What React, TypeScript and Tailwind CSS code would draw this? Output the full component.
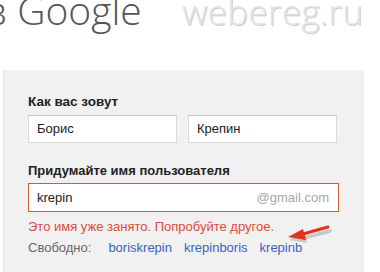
const suggestions = ["boriskrepin", "krepinboris", "krepinb"];

const App = () => {
  return (
    <div className="w-[380px] h-[272px] overflow-hidden bg-white font-['Liberation_Sans',Arial,sans-serif]">
      <div className="h-[70px] overflow-hidden flex items-start">
        <h1 className="-mt-[8px] -ml-[15px] w-[197px] shrink-0 font-['Open_Sans',sans-serif] font-light text-[39px] leading-[36px] text-[#555] whitespace-nowrap">
          в Google
        </h1>
        <span className="-mt-[6px] font-['Open_Sans',sans-serif] font-light text-[35px] leading-[36px] tracking-[0.3px] text-[#e4e4e4] [text-shadow:1px_1px_0_#cdcdcd] whitespace-nowrap">
          webereg.ru
        </span>
      </div>

      <div className="relative ml-[3px] w-[361px] h-[220px] bg-[#f1f1f1] border-l border-[#e4e4e4] pt-[24px] pl-[24px]">
        <div className="text-[13.5px] leading-[16px] font-bold text-[#222]">Как вас зовут</div>
        <div className="mt-[5px] flex gap-[11px]">
          <div className="w-[149px] h-[28px] bg-white border border-[#d9d9d9] border-t-[#c4c4c4] pl-[8px] flex items-center text-[13px] text-[#222]">
            Борис
          </div>
          <div className="w-[149px] h-[28px] bg-white border border-[#d9d9d9] border-t-[#c4c4c4] pl-[8px] flex items-center text-[13px] text-[#222]">
            Крепин
          </div>
        </div>

        <div className="mt-[20px] text-[13px] leading-[16px] font-bold text-[#222]">
          Придумайте имя пользователя
        </div>
        <div className="mt-[4px] w-[311px] h-[29px] bg-white border border-[#cf5d3c] pl-[8px] pr-[9px] flex items-center justify-between text-[13px]">
          <span className="text-[#222]">krepin</span>
          <span className="text-[#a8a8a8]">@gmail.com</span>
        </div>

        <div className="mt-[7px] text-[13px] leading-[16px] text-[#dd4b39]">
          Это имя уже занято. Попробуйте другое.
        </div>
        <div className="mt-[5px] flex text-[13px] leading-[16px]">
          <span className="text-[#666]">Свободно:</span>
          <div className="ml-[17px] flex gap-[12px]">
            {suggestions.map((s) => (
              <span key={s} className="text-[#3f5ec2]">
                {s}
              </span>
            ))}
          </div>
        </div>

        <svg
          className="absolute left-[277px] top-[150px]"
          width="56"
          height="28"
          viewBox="0 0 56 28"
        >
          <path d="M48 9 L22 16" stroke="#7a7a7a" strokeOpacity="0.35" strokeWidth="3.5" strokeLinecap="round" transform="translate(1 2)" />
          <path d="M7 18 L23 10 L25 21 Z" fill="#7a7a7a" fillOpacity="0.35" transform="translate(1 2)" />
          <path d="M47 7 L22 14" stroke="#e2321c" strokeWidth="3" strokeLinecap="round" />
          <path d="M7 17 L22 9 L25 20 Z" fill="#e2321c" />
        </svg>
      </div>
    </div>
  );
};

export default App;
